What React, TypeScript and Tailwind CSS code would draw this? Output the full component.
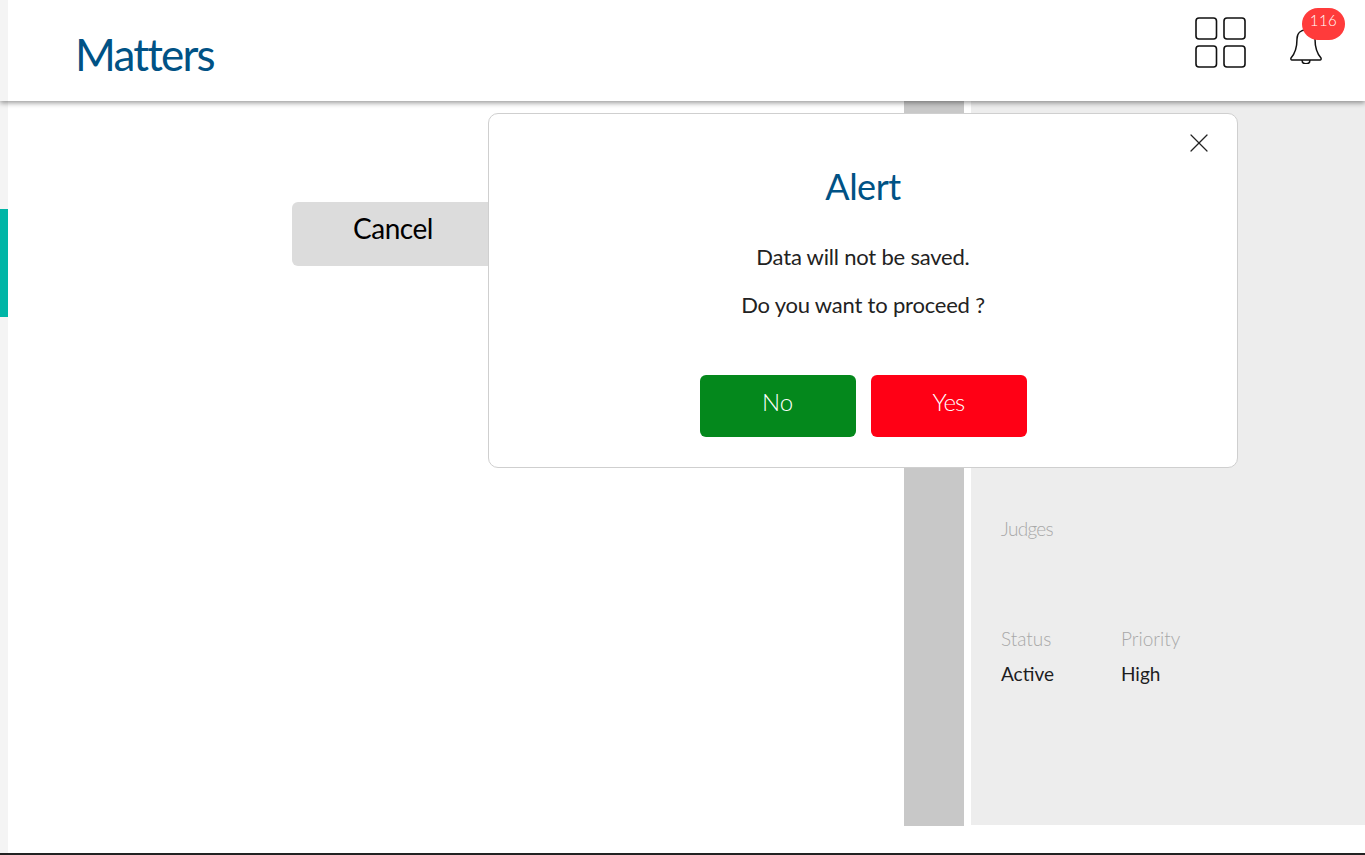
import React from "react";
import { X } from "lucide-react";

const font = "font-['Lato','Open_Sans',sans-serif]";

function GridIcon() {
  return (
    <svg width="51" height="51" viewBox="0 0 51 51" fill="none" stroke="#111" strokeWidth="1.6">
      <rect x="1" y="1" width="20.5" height="21" rx="3" />
      <rect x="29" y="1" width="21" height="21" rx="3" />
      <rect x="1" y="29" width="20.5" height="21" rx="3" />
      <rect x="29" y="29" width="21" height="21" rx="3" />
    </svg>
  );
}

function BellIcon() {
  return (
    <svg width="32" height="38" viewBox="0 0 32 38" fill="none" stroke="#111" strokeWidth="1.5" strokeLinejoin="round">
      <path d="M7 13 C7 7 11 4 16 4 C21 4 25 7 25 13 C25 22 26.5 27 31 32 Q31.5 34 30 34 H2 Q0.5 34 1 32 C5.5 27 7 22 7 13 Z" />
      <path d="M12 34 C12 39 20 39 20 34" />
    </svg>
  );
}

export default function App() {
  return (
    <div className={`relative flex h-[855px] w-full flex-col overflow-hidden bg-white ${font}`}>
      <header className="relative z-10 flex h-[101px] shrink-0 bg-white shadow-[0_2px_5px_rgba(0,0,0,0.4)]">
        <div className="w-2 shrink-0 bg-[#f4f4f4]" />
        <div className="flex flex-1 items-start justify-between pl-[68px] pr-[20px]">
          <h1 className="mt-[32px] text-[44px] leading-[44px] font-normal tracking-[-1.8px] text-[#005285] -translate-x-[1px]">Matters</h1>
          <div className="mt-[17px] flex items-start gap-[44px]">
            <GridIcon />
            <div className="relative mr-[23px] mt-[9px]">
              <BellIcon />
              <span className="absolute left-[12px] top-[-18px] flex h-[32px] w-[43px] items-center justify-center rounded-full bg-[#ff3b3b] pb-[7px] text-[15px] font-light tracking-[0.5px] text-white">
                116
              </span>
            </div>
          </div>
        </div>
      </header>

      <div className="flex h-[752px] shrink-0">
        {/* left strip */}
        <div className="w-2 shrink-0 bg-[#f4f4f4] pt-[108px]">
          <div className="h-[108px] bg-[#00b5a6]" />
        </div>

        <main className="flex-1 pl-[284px] pt-[101px]">
          <button className="h-[64px] w-[240px] rounded-[6px] bg-[#dcdcdc] pb-[12px] pr-[38px] text-[28px] tracking-[-0.5px] text-black">
            Cancel
          </button>
        </main>
        <div className="h-[725px] w-[60px] shrink-0 bg-[#c8c8c8]" />
        <aside className="ml-[7px] flex h-[724px] w-[394px] shrink-0 flex-col bg-[#ededed] pl-[30px] pt-[414px]">
          <div className="text-[19px] font-light leading-[28px] tracking-[-0.7px] text-[#a8a8a8]">Judges</div>
          <div className="mt-[82px] flex">
            <div className="w-[120px]">
              <div className="text-[19px] font-light leading-[28px] text-[#a8a8a8]">Status</div>
              <div className="mt-[7px] text-[19px] leading-[28px] text-[#1d1d1f]">Active</div>
            </div>
            <div>
              <div className="text-[19px] font-light leading-[28px] text-[#a8a8a8]">Priority</div>
              <div className="mt-[7px] text-[19px] leading-[28px] text-[#1d1d1f]">High</div>
            </div>
          </div>
        </aside>
      </div>

      <div className="h-[2px] w-full bg-[#222222]" />

      {/* alert dialog */}
      <div className="absolute left-[488px] top-[113px] z-20 flex h-[355px] w-[750px] flex-col items-center rounded-[10px] border border-[#cfcfcf] bg-white pt-[50px]">
        <X className="absolute right-[22px] top-[13px] h-[32px] w-[32px] text-[#222222]" strokeWidth={0.9} />
        <h2 className="text-[36px] leading-[44px] font-normal tracking-[-0.5px] text-[#005285]">Alert</h2>
        <p className="mt-[34px] text-[22px] leading-[30px] tracking-[-0.2px] text-[#222222]">Data will not be saved.</p>
        <p className="mt-[18px] text-[22px] leading-[30px] tracking-[-0.2px] text-[#222222]">Do you want to proceed ?</p>
        <div className="mt-[55px] flex gap-[15px]">
          <button className="h-[62px] w-[156px] rounded-[6px] bg-[#04881c] pb-[8px] text-[24px] font-light text-white">No</button>
          <button className="h-[62px] w-[156px] rounded-[6px] bg-[#ff0015] pb-[8px] text-[24px] font-light tracking-[-0.8px] text-white">Yes</button>
        </div>
      </div>
    </div>
  );
}
